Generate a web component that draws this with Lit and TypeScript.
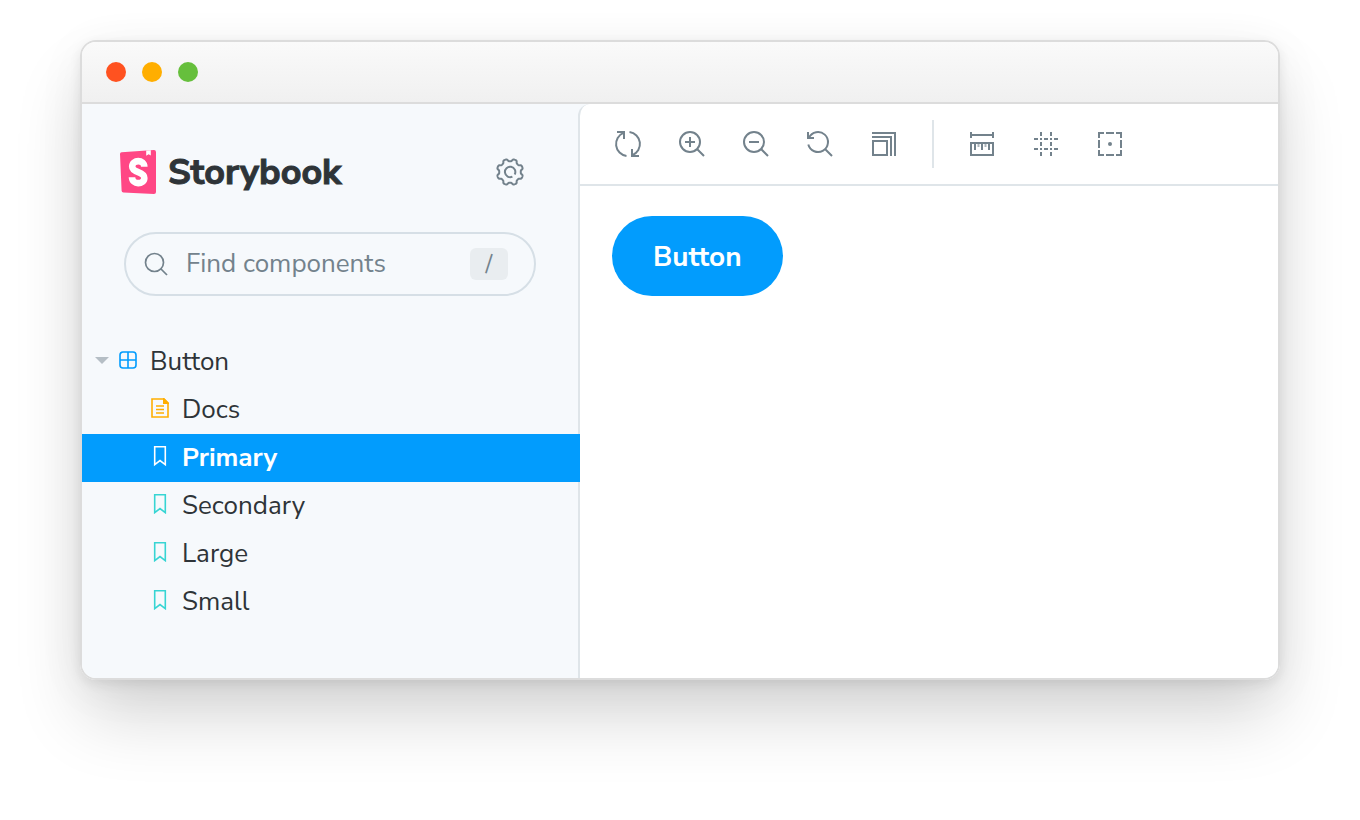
import { LitElement, html, css, svg } from "lit";
import { customElement, state } from "lit/decorators.js";

const gear = (() => {
  const pts: string[] = [];
  for (let i = 0; i < 144; i++) {
    const a = (i / 144) * Math.PI * 2;
    const w = Math.cos(8 * a);
    const r = 12 - 1.2 * Math.tanh(2.2 * w) / Math.tanh(2.2);
    pts.push(`${(14 + r * Math.cos(a)).toFixed(2)} ${(14 + r * Math.sin(a)).toFixed(2)}`);
  }
  return "M" + pts.join("L") + "Z";
})();

const icons = {
  sync: svg`<path d="M12.5 25.9A12 12 0 0 1 9.5 2.9M3 2H10V9M15.5 2.1A12 12 0 0 1 18.5 25.1M25 26H18V19"/>`,
  zoomIn: svg`<circle cx="12" cy="12" r="10"/><path d="M19 19L26 26M7 12H17M12 7V17"/>`,
  zoomOut: svg`<circle cx="12" cy="12" r="10"/><path d="M19 19L26 26M7 12H17"/>`,
  zoomReset: svg`<path d="M3 7.6A10 10 0 1 1 2.3 14.5M19 19L26 26M2 2V8H8"/>`,
  grow: svg`<path d="M2 3H25V26M2 7H21V26M3 11H17V25H3Z"/>`,
  ruler: svg`<path d="M3 2V8M25 2V8M3 5H25M3 13H25V25H3ZM7 13V20M14 13V20M21 13V20"/><path d="M10.5 13V17M17.5 13V17" stroke-opacity=".6"/>`,
  grid: svg`<path d="M9 2V6M9 8V10M9 12V16M9 18V20M9 22V26M19 2V6M19 8V10M19 12V16M19 18V20M19 22V26M2 9H6M12 9H16M22 9H26M2 19H6M12 19H16M22 19H26"/>`,
  outline: svg`<path d="M8 3H3V8M10 3H18M20 3H25V8M25 10V18M25 20V25H20M18 25H10M8 25H3V20M3 18V10"/><circle cx="14" cy="14" r="2" fill="currentColor" stroke="none"/>`,
};

type Tool = { label: string; icon: unknown };
const zoomTools: Tool[] = [
  { label: "Remount component", icon: icons.sync },
  { label: "Zoom in", icon: icons.zoomIn },
  { label: "Zoom out", icon: icons.zoomOut },
  { label: "Reset zoom", icon: icons.zoomReset },
  { label: "Change viewport", icon: icons.grow },
];
const addonTools: Tool[] = [
  { label: "Measure", icon: icons.ruler },
  { label: "Grid", icon: icons.grid },
  { label: "Outline", icon: icons.outline },
];

@customElement("app-root")
export class AppRoot extends LitElement {
  @state() private selected = "Primary";

  static styles = css`
    :host {
      display: flex;
      box-sizing: border-box;
      min-height: 100vh;
      padding: 40px 80px 140px;
      background: #fff;
      color: #2e3438;
      font-family: "Nunito Sans", "Nunito", "Open Sans", "Noto Sans", sans-serif;
      font-size: 26px;
      line-height: 32px;
    }
    * { box-sizing: border-box; }
    svg { display: block; flex: none; overflow: visible; fill: none; stroke: currentColor; stroke-width: 2; }
    button { font: inherit; color: inherit; border: 0; background: none; padding: 0; cursor: pointer; }
    .window {
      flex: 1;
      min-width: 0;
      display: flex;
      flex-direction: column;
      border: 2px solid #dcdcdc;
      border-radius: 16px;
      overflow: hidden;
      box-shadow: 0 40px 70px -4px rgba(0, 0, 0, 0.16), 0 8px 50px rgba(0, 0, 0, 0.05), 0 4px 12px rgba(0, 0, 0, 0.08);
    }
    .titlebar {
      display: flex;
      align-items: center;
      gap: 16px;
      height: 62px;
      padding: 0 24px;
      background: linear-gradient(#fafafa, #f0f0f0);
      border-bottom: 2px solid #dcdcdc;
    }
    .dot { width: 20px; height: 20px; border-radius: 50%; }
    .red { background: #ff5220; }
    .amber { background: #ffae00; }
    .green { background: #66bf3c; }
    .body { flex: 1; display: flex; background: #f6f9fc; }
    .sidebar { width: 496px; flex: none; z-index: 1; }
    .brand { display: flex; align-items: center; height: 44px; margin: 46px 54px 38px 38px; gap: 12px; }
    .name { flex: 1; margin: 0; padding-top: 2px; font-size: 36px; line-height: 44px; font-weight: 700; -webkit-text-stroke: 1px currentColor; }
    .muted { color: #73828c; }
    .search {
      display: flex;
      align-items: center;
      height: 64px;
      margin: 0 42px;
      padding: 0 26px 0 18px;
      border: 2px solid #d6dfe6;
      border-radius: 32px;
      color: #73828c;
    }
    .search svg { stroke-width: 1.7; }
    .search input {
      flex: 1;
      min-width: 0;
      margin: 0 0 0 18px;
      padding: 0;
      border: 0;
      outline: 0;
      background: none;
      font: inherit;
      color: inherit;
    }
    .search input::placeholder { color: #73828c; opacity: 1; }
    kbd { width: 38px; height: 32px; border-radius: 6px; background: #e9edf0; font: inherit; font-size: 24px; line-height: 32px; text-align: center; }
    .tree { margin: 42px 0 0; padding: 0; list-style: none; }
    .tree button { display: flex; align-items: center; width: 100%; height: 48px; text-align: left; }
    .tree .parent { padding-left: 13px; }
    .tree .story { padding-left: 68px; gap: 12px; }
    .arrow { margin-right: 9px; fill: #b5bec5; stroke: none; }
    .component { margin-right: 12px; color: #029cfd; stroke-width: 1.6; }
    .docs { color: #ffae00; stroke-width: 1.6; }
    .bookmark { color: #37d5d3; stroke-width: 1.6; }
    .tree .active { width: calc(100% + 2px); background: #029cfd; color: #fff; font-weight: 700; }
    .active .bookmark { color: #fff; }
    .main { flex: 1; min-width: 0; background: #fff; border-left: 2px solid #dfe5e9; border-top-left-radius: 12px; }
    .toolbar { display: flex; align-items: center; gap: 36px; height: 82px; padding: 0 34px; color: #73828c; border-bottom: 2px solid #dfe5e9; }
    .divider { width: 2px; height: 48px; background: #dfe5e9; margin: 0 -2px; }
    .canvas { padding: 30px 32px; }
    .canvas .primary { height: 80px; padding: 2px 41px 0; border-radius: 40px; background: #029cfd; color: #fff; font-size: 28px; font-weight: 700; }
  `;

  private tool(t: Tool) {
    return html`<button aria-label=${t.label}><svg width="28" height="28" viewBox="0 0 28 28">${t.icon}</svg></button>`;
  }

  private story(name: string) {
    const docs = name === "Docs";
    return html`<li>
      <button class="story ${this.selected === name ? "active" : ""}" @click=${() => (this.selected = name)}>
        ${docs
          ? html`<svg class="docs" width="20" height="24" viewBox="0 0 20 24"><path d="M14 1H2V19H18V5Z" /><path d="M13 0H14L19 5V6H13Z" fill="currentColor" stroke="none" /><path d="M6 8H14M6 11.500H14M6 15H14" /></svg>`
          : html`<svg class="bookmark" width="20" height="24" viewBox="0 0 20 24"><path d="M4.700 .8H15.300V18.700L10 14.500L4.700 18.700Z" /></svg>`}
        <span>${name}</span>
      </button>
    </li>`;
  }

  render() {
    return html`
      <div class="window">
        <header class="titlebar"><span class="dot red"></span><span class="dot amber"></span><span class="dot green"></span></header>
        <div class="body">
          <aside class="sidebar">
            <div class="brand">
              <svg width="36" height="44" viewBox="0 0 36 44">
                <path fill="#ff4785" stroke="none" d="M0 4Q0 2.400 1.600 2.300L33.800 .1Q36 0 36 2V42Q36 44 34 44L3.400 42.600Q1.700 42.500 1.600 40.800Z" />
                <path fill="#fff" stroke="none" d="M26.200 .6L30.800 .3V5.600L28.600 4.200L26.200 5.800Z" />
                <path stroke="#fff" stroke-width="6.600" d="M24.300 16.800C24.300 9.200 12.200 9.400 12.200 16.600C12.200 23.400 24.300 21 24.300 28C24.300 35 12 35 12 27.200" />
              </svg>
              <h1 class="name">Storybook</h1>
              <button class="muted" aria-label="Settings"><svg width="28" height="28" viewBox="0 0 28 28"><path d=${gear} /><path d="M18.700 16.400A5.200 5.200 0 1 0 16.400 18.600" /></svg></button>
            </div>
            <label class="search">
              <svg width="24" height="24" viewBox="0 0 24 24"><circle cx="10.500" cy="10.500" r="9" /><path d="M17 17L23 23" /></svg>
              <input type="text" aria-label="Find components" placeholder="Find components" />
              <kbd>/</kbd>
            </label>
            <ul class="tree">
              <li>
                <button class="parent" aria-expanded="true">
                  <svg class="arrow" width="14" height="10" viewBox="0 0 14 10"><path d="M0 0H14L7 7Z" /></svg>
                  <svg class="component" width="20" height="20" viewBox="0 0 20 20"><rect x="2" y="0" width="16" height="16" rx="3" /><path d="M10 0V16M2 8H18" /></svg>
                  <span>Button</span>
                </button>
              </li>
              ${["Docs", "Primary", "Secondary", "Large", "Small"].map((n) => this.story(n))}
            </ul>
          </aside>
          <main class="main">
            <div class="toolbar">
              ${zoomTools.map((t) => this.tool(t))}
              <span class="divider"></span>
              ${addonTools.map((t) => this.tool(t))}
            </div>
            <div class="canvas"><button class="primary">Button</button></div>
          </main>
        </div>
      </div>
    `;
  }
}
